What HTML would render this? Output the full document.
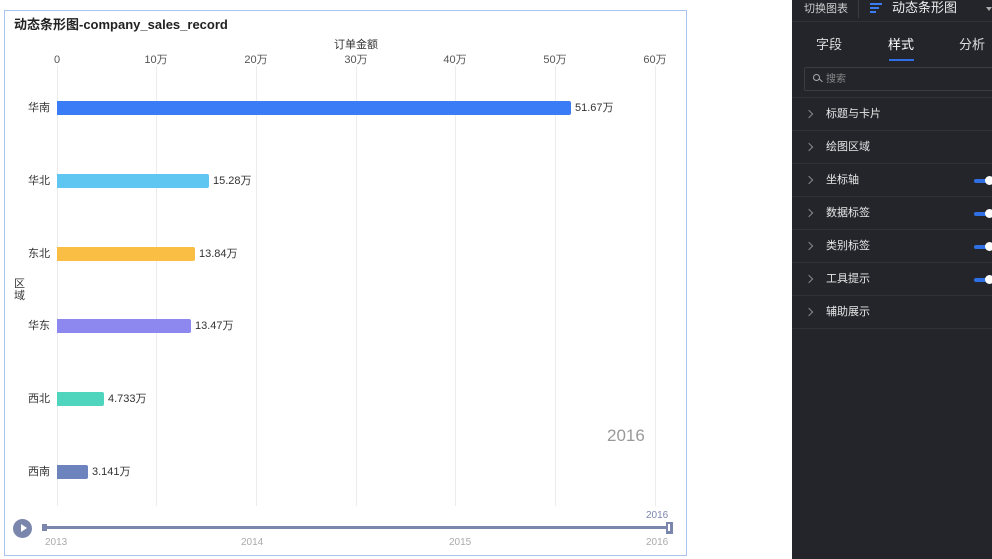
<!DOCTYPE html>
<html><head><meta charset="utf-8"><style>
*{margin:0;padding:0;box-sizing:border-box}
body{width:992px;height:559px;background:#fff;position:relative;overflow:hidden;font-family:"Liberation Sans","Noto Sans CJK SC",sans-serif}
.abs{position:absolute}
div,span{line-height:14px}
.chart{left:4px;top:10px;width:683px;height:546px;border:1px solid #a9c4f0;background:#fff}
.t{font-size:12px;color:#333}
.grid{top:66px;width:1px;height:440px;background:#ececec}
.tick{top:53px;font-size:11px;color:#555;width:40px;text-align:center;margin-left:-20px}
.bar{height:14px;left:57px;border-radius:0 2px 2px 0}
.cat{left:14px;width:36px;text-align:right;font-size:11px;color:#333}
.val{font-size:11px;color:#333}
.panel{left:792px;top:0;width:200px;height:559px;background:#23252b;color:#ddd}
.row{position:absolute;left:0;width:200px;height:33px;border-bottom:1px solid #30323a;font-size:11px;color:#e6e6e6}
.row span{position:absolute;left:34px;top:9px}
.row i{position:absolute;left:14px;top:13px;width:6px;height:6px;border-right:1px solid #888;border-top:1px solid #888;transform:rotate(45deg)}
.tg{position:absolute;left:182px;top:15px;width:14px;height:4px;background:#2f6fe6;border-radius:2px}
.tg:after{content:"";position:absolute;right:-6px;top:-3px;width:9px;height:9px;border-radius:50%;background:#fff}
</style></head><body>
<div class="abs chart"></div>
<div class="abs" style="left:14px;top:18px;font-size:13px;font-weight:bold;color:#222">动态条形图-company_sales_record</div>
<div class="abs t" style="left:334px;top:38px;font-size:11px">订单金额</div>
<div class="abs grid" style="left:57px"></div><div class="abs grid" style="left:156px"></div><div class="abs grid" style="left:256px"></div><div class="abs grid" style="left:356px"></div><div class="abs grid" style="left:455px"></div><div class="abs grid" style="left:555px"></div><div class="abs grid" style="left:655px"></div>
<div class="abs tick" style="left:57px">0</div><div class="abs tick" style="left:156px">10万</div><div class="abs tick" style="left:256px">20万</div><div class="abs tick" style="left:356px">30万</div><div class="abs tick" style="left:455px">40万</div><div class="abs tick" style="left:555px">50万</div><div class="abs tick" style="left:655px">60万</div>
<div class="abs" style="left:14px;top:278px;font-size:11px;color:#333;width:12px;line-height:12px">区域</div>
<div class="abs cat" style="top:101px">华南</div><div class="abs bar" style="top:101px;width:514px;background:#3a7cf6"></div><div class="abs val" style="left:575px;top:101px">51.67万</div>
<div class="abs cat" style="top:174px">华北</div><div class="abs bar" style="top:174px;width:152px;background:#5fc6f2"></div><div class="abs val" style="left:213px;top:174px">15.28万</div>
<div class="abs cat" style="top:247px">东北</div><div class="abs bar" style="top:247px;width:138px;background:#fbbe45"></div><div class="abs val" style="left:199px;top:247px">13.84万</div>
<div class="abs cat" style="top:319px">华东</div><div class="abs bar" style="top:319px;width:134px;background:#8d88ef"></div><div class="abs val" style="left:195px;top:319px">13.47万</div>
<div class="abs cat" style="top:392px">西北</div><div class="abs bar" style="top:392px;width:47px;background:#4fd4be"></div><div class="abs val" style="left:108px;top:392px">4.733万</div>
<div class="abs cat" style="top:465px">西南</div><div class="abs bar" style="top:465px;width:31px;background:#6c83bd"></div><div class="abs val" style="left:92px;top:465px">3.141万</div>
<div class="abs" style="left:607px;top:427px;font-size:17px;line-height:18px;color:#999">2016</div>
<div class="abs" style="left:13px;top:519px;width:19px;height:19px;border-radius:50%;background:#7b86ad"></div>
<div class="abs" style="left:21px;top:524px;width:0;height:0;border-left:6px solid #fff;border-top:4px solid transparent;border-bottom:4px solid transparent"></div>
<div class="abs" style="left:42px;top:526px;width:630px;height:3px;background:#7b86ad"></div>
<div class="abs" style="left:42px;top:524px;width:5px;height:7px;background:#7b86ad"></div>
<div class="abs" style="left:666px;top:522px;width:7px;height:12px;background:#7b86ad;border:2px solid #7b86ad"></div>
<div class="abs" style="left:668px;top:524px;width:2px;height:7px;background:#fff"></div>
<div class="abs" style="left:646px;top:509px;font-size:10px;color:#7b86ad">2016</div>
<div class="abs" style="left:45px;top:536px;font-size:10px;color:#aaa">2013</div>
<div class="abs" style="left:241px;top:536px;font-size:10px;color:#aaa">2014</div>
<div class="abs" style="left:449px;top:536px;font-size:10px;color:#aaa">2015</div>
<div class="abs" style="left:646px;top:536px;font-size:10px;color:#aaa">2016</div>

<div class="abs panel">
<div class="abs" style="left:0;top:0;width:200px;height:22px;border-bottom:1px solid #30323a"></div>
<div class="abs" style="left:12px;top:2px;font-size:11px;color:#ccc">切换图表</div>
<div class="abs" style="left:66px;top:0;width:1px;height:18px;background:#3a3c44"></div>
<div class="abs" style="left:78px;top:3px;width:12px;height:2px;background:#3a7cf6"></div>
<div class="abs" style="left:78px;top:7px;width:9px;height:2px;background:#3a7cf6"></div>
<div class="abs" style="left:78px;top:11px;width:6px;height:2px;background:#3a7cf6"></div>
<div class="abs" style="left:100px;top:0;font-size:13px;line-height:16px;color:#eee">动态条形图</div>
<div class="abs" style="left:194px;top:7px;border-top:4px solid #aaa;border-left:3px solid transparent;border-right:3px solid transparent"></div>
<div class="abs" style="left:24px;top:37px;font-size:13px;line-height:16px;color:#ddd">字段</div>
<div class="abs" style="left:96px;top:37px;font-size:13px;line-height:16px;color:#fff">样式</div>
<div class="abs" style="left:97px;top:59px;width:25px;height:2px;background:#2f6fe6"></div>
<div class="abs" style="left:167px;top:37px;font-size:13px;line-height:16px;color:#ddd">分析</div>
<div class="abs" style="left:12px;top:67px;width:190px;height:24px;border:1px solid #3a3c44;border-radius:2px"></div>
<div class="abs" style="left:21px;top:74px;width:7px;height:7px;border:1px solid #aaa;border-radius:50%"></div>
<div class="abs" style="left:27px;top:80px;width:4px;height:1px;background:#aaa;transform:rotate(45deg)"></div>
<div class="abs" style="left:34px;top:73px;font-size:10px;color:#888">搜索</div>
<div class="abs" style="left:0;top:97px;width:200px;height:1px;background:#30323a"></div>
<div class="row" style="top:98px"><i></i><span>标题与卡片</span></div>
<div class="row" style="top:131px"><i></i><span>绘图区域</span></div>
<div class="row" style="top:164px"><i></i><span>坐标轴</span><b class="tg"></b></div>
<div class="row" style="top:197px"><i></i><span>数据标签</span><b class="tg"></b></div>
<div class="row" style="top:230px"><i></i><span>类别标签</span><b class="tg"></b></div>
<div class="row" style="top:263px"><i></i><span>工具提示</span><b class="tg"></b></div>
<div class="row" style="top:296px"><i></i><span>辅助展示</span></div>
</div>
</body></html>
